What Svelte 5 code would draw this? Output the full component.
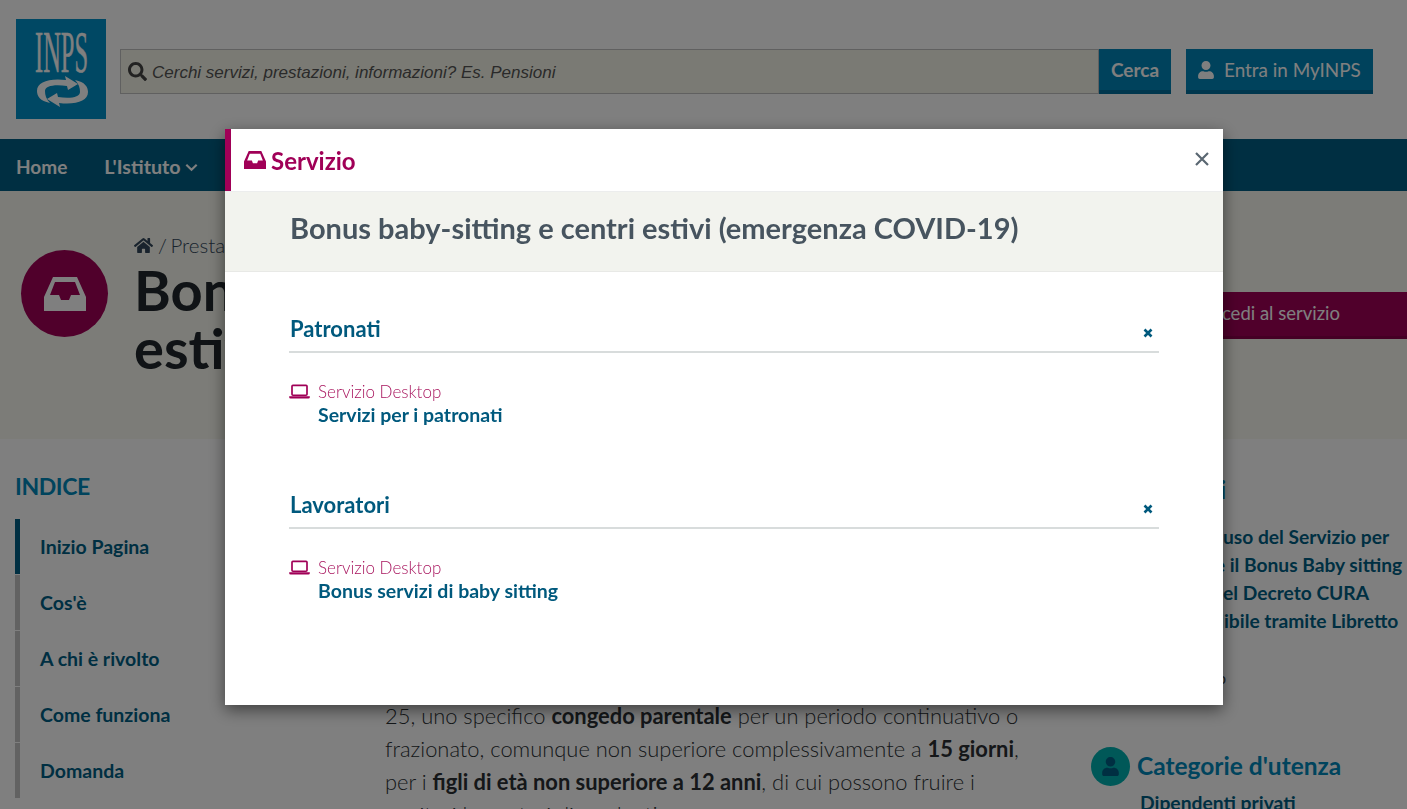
<script>
  const toc = ['Inizio Pagina', "Cos'è", 'A chi è rivolto', 'Come funziona', 'Domanda'];
  const links = [
    ['Guida all’', 'uso del Servizio per', 116],
    ['richiedere', ' il Bonus Baby sitting', 118],
    ['previsto d', 'el Decreto CURA', 116],
    ['spend', 'ibile tramite Libretto', 117]
  ];
  const groups = [
    { title: 'Patronati', link: 'Servizi per i patronati' },
    { title: 'Lavoratori', link: 'Bonus servizi di baby sitting' }
  ];
  const inbox = 'M9 0H33L42 20V34H0V20ZM11 5 6 18H15L17 23H25L27 18H36L31 5Z';
  const user = 'M224 256c70.7 0 128-57.3 128-128S294.7 0 224 0 96 57.3 96 128s57.3 128 128 128zm89.6 32h-16.7c-22.2 10.2-46.9 16-72.9 16s-50.6-5.8-72.9-16h-16.7C60.2 288 0 348.2 0 422.4V464c0 26.5 21.5 48 48 48h352c26.5 0 48-21.5 48-48v-41.6c0-74.2-60.2-134.4-134.4-134.4z';
  const swirl = 'M34 84C24 82 21 77 21 72C21 63 33 59 50 61L49 57L62 65L52 71L51 67C38 65 29 67 29 72C29 76 30 80 34 84Z';
</script>

<div class="page">
  <header class="top">
    <svg class="logo" viewBox="0 0 90 100" aria-label="INPS">
      <rect width="90" height="100" fill="#0090c8" />
      <text x="19" y="53" class="logotext" textLength="53" lengthAdjust="spacingAndGlyphs">INPS</text>
      <path d={swirl} fill="#fff" />
      <path d={swirl} fill="#fff" transform="rotate(180 46.5 72.5)" />
    </svg>
    <form class="search">
      <svg class="sicon" viewBox="0 0 512 512"><path d="M505 442.7L405.3 343c-4.5-4.5-10.6-7-17-7H372c27.6-35.3 44-79.7 44-128C416 93.1 322.9 0 208 0S0 93.1 0 208s93.1 208 208 208c48.3 0 92.7-16.4 128-44v16.3c0 6.4 2.5 12.5 7 17l99.7 99.7c9.4 9.4 24.6 9.4 33.9 0l28.3-28.3c9.4-9.4 9.4-24.6.1-34zM208 336c-70.7 0-128-57.2-128-128 0-70.7 57.2-128 128-128 70.7 0 128 57.2 128 128 0 70.7-57.2 128-128 128z" /></svg>
      <span class="ph">Cerchi servizi, prestazioni, informazioni? Es. Pensioni</span>
    </form>
    <span class="btn cerca">Cerca</span>
    <span class="btn entra">
      <svg class="uicon" viewBox="0 0 448 512"><path d={user} /></svg>
      Entra in MyINPS
    </span>
  </header>

  <nav class="nav">
    <span>Home</span>
    <span class="ist">L'Istituto <svg class="chev" viewBox="0 0 12 8"><path d="M1.2 1.5 6 6l4.8-4.5" /></svg></span>
  </nav>

  <section class="hero">
    <div class="badge"><svg viewBox="0 0 42 34"><path fill-rule="evenodd" d={inbox} /></svg></div>
    <div class="herotext">
      <div class="crumb">
        <svg viewBox="0 0 576 512"><path d="M280.37 148.26L96 300.11V464a16 16 0 0 0 16 16l112.06-.29a16 16 0 0 0 15.92-16V368a16 16 0 0 1 16-16h64a16 16 0 0 1 16 16v95.64a16 16 0 0 0 16 16.05L464 480a16 16 0 0 0 16-16V300L295.67 148.26a12.19 12.19 0 0 0-15.3 0zM571.6 251.47L488 182.56V44.05a12 12 0 0 0-12-12h-56a12 12 0 0 0-12 12v72.61L318.47 43a48 48 0 0 0-61 0L4.34 251.47a12 12 0 0 0-1.6 16.9l25.5 31A12 12 0 0 0 45.15 301l235.22-193.74a12.19 12.19 0 0 1 15.3 0L530.9 301a12 12 0 0 0 16.9-1.6l25.5-31a12 12 0 0 0-1.7-16.93z" /></svg>
        <span class="path">/ Prestazioni e servizi</span>
      </div>
      <h1>Bonus baby-sitting e centri<br />estivi (emergenza COVID-19)</h1>
    </div>
    <span class="access">Accedi al servizio</span>
  </section>

  <div class="columns">
    <aside class="index">
      <h2>INDICE</h2>
      <ul>
        {#each toc as t, i}
          <li class:active={i === 0}>{t}</li>
        {/each}
      </ul>
    </aside>
    <main class="body">
      <p>
        25, uno specifico <b>congedo parentale</b> per un periodo continuativo o<br />
        frazionato, comunque non superiore complessivamente a <b>15 giorni</b>,<br />
        per i <b>figli di età non superiore a 12 anni</b>, di cui possono fruire i<br />
        genitori lavoratori dipendenti
      </p>
    </main>
    <aside class="right">
      <h3 class="guide">Link utili</h3>
      <div class="guides">
        {#each links as l}
          <div class="gl"><span class="hid" style="width:{l[2]}px">{l[0]}</span>{l[1]}</div>
        {/each}
      </div>
      <div class="more">Mostra tutto</div>
      <div class="cat">
        <span class="catb"><svg viewBox="0 0 448 512"><path d={user} /></svg></span>
        <h3>Categorie d'utenza</h3>
      </div>
      <div class="dip">Dipendenti privati</div>
    </aside>
  </div>
</div>

<div class="overlay">
  <div class="modal">
    <div class="mhead">
      <svg class="minbox" viewBox="0 0 42 34"><path fill-rule="evenodd" d={inbox} /></svg>
      <span class="mtitle">Servizio</span>
      <svg class="close" viewBox="0 0 16 16"><path d="M2 2l12 12M14 2 2 14" /></svg>
    </div>
    <div class="band"><h2>Bonus baby-sitting e centri estivi (emergenza COVID-19)</h2></div>
    <div class="mbody">
      {#each groups as g}
        <section class="group">
          <div class="ghead">
            <h3>{g.title}</h3>
            <svg viewBox="0 0 10 10"><path d="M1.5 1.5l7 7M8.5 1.5l-7 7" /></svg>
          </div>
          <div class="item">
            <svg class="laptop" viewBox="0 0 22 16"><rect x="3" y="1.5" width="16" height="10.5" rx="1" /><path class="base" d="M0 13h22v1a1.5 1.5 0 0 1-1.5 1.5h-19A1.5 1.5 0 0 1 0 14z" /></svg>
            <div>
              <div class="kind">Servizio Desktop</div>
              <div class="lnk">{g.link}</div>
            </div>
          </div>
        </section>
      {/each}
    </div>
  </div>
</div>

<style>
  :global(html), :global(body) {
    margin: 0;
    height: 100%;
    overflow: hidden;
    background: #fff;
  }
  .page {
    height: 809px;
    overflow: hidden;
    font-family: Lato, "Noto Sans", sans-serif;
    color: #1f2933;
  }
  .top {
    height: 139px;
    box-sizing: border-box;
    padding: 19px 34px 0 16px;
    display: flex;
    align-items: flex-start;
  }
  .logo { width: 90px; height: 100px; flex: none; }
  .logotext { font-family: "Liberation Serif", serif; font-size: 60px; fill: #fff; stroke: #fff; stroke-width: 0.5; }
  .search {
    margin: 30px 0 0 14px;
    height: 45px;
    flex: 1;
    box-sizing: border-box;
    border: 1px solid #c0c0c0;
    background: #f5f5e8;
    display: flex;
    align-items: center;
    padding-left: 7px;
    gap: 5px;
  }
  .sicon { width: 19px; height: 19px; fill: #444; }
  .ph {
    font: italic 17px "Liberation Sans", sans-serif;
    color: #555;
    padding-top: 3px;
  }
  .btn {
    margin-top: 30px;
    height: 45px;
    box-sizing: border-box;
    background: #0085b8;
    border-bottom: 4px solid #006f9c;
    color: #fff;
    display: flex;
    align-items: center;
    font-size: 19px;
  }
  .cerca { width: 72px; justify-content: center; font-weight: 700; }
  .entra { width: 187px; margin-left: 15px; padding-left: 12px; gap: 10px; font-size: 18.9px; font-weight: 400; }
  .uicon { width: 16px; height: 18px; fill: #fff; }
  .nav {
    height: 52px;
    box-sizing: border-box;
    padding: 2px 0 0 16px;
    background: #005f85;
    color: #fff;
    display: flex;
    align-items: center;
    gap: 37px;
    font-weight: 700;
    font-size: 19px;
  }
  .ist { font-size: 19.7px; }
  .chev { width: 13px; height: 9px; fill: none; stroke: #fff; stroke-width: 2; margin-bottom: 2px; }
  .hero {
    height: 248px;
    background: #f8f9f0;
    position: relative;
    box-sizing: border-box;
    padding: 44px 0 0 21px;
    display: flex;
  }
  .badge {
    width: 87px;
    height: 87px;
    margin-top: 15px;
    border-radius: 50%;
    background: #a00057;
    display: flex;
    align-items: center;
    justify-content: center;
    flex: none;
  }
  .badge svg { width: 42px; height: 34px; fill: #fff; }
  .herotext { margin-left: 26px; }
  .crumb { font-size: 20.5px; font-weight: 300; color: #33475b; display: flex; align-items: center; gap: 5px; height: 20px; }
  .path { word-spacing: -2px; }
  .crumb svg { width: 19px; height: 17px; fill: #33475b; }
  h1 {
    margin: 6px 0 0;
    font-size: 56px;
    line-height: 58px;
    font-weight: 700;
    white-space: nowrap;
    color: #20262c;
  }
  .access {
    position: absolute;
    right: 0;
    top: 101px;
    width: 232px;
    height: 47px;
    box-sizing: border-box;
    background: #a00057;
    border-bottom: 3px solid #8a004a;
    color: #fff;
    display: flex;
    align-items: center;
    padding: 0 0 3px 26px;
    font-size: 18.5px;
  }
  .columns { display: flex; }
  .index { width: 385px; box-sizing: border-box; padding: 32px 0 0 15px; flex: none; }
  .index h2 { margin: 0 0 18px; font-size: 23px; letter-spacing: -0.4px; line-height: 30px; color: #0088bb; font-weight: 700; }
  .index ul { list-style: none; margin: 0; padding: 0; }
  .index li {
    height: 55px;
    margin-bottom: 1px;
    border-left: 5px solid #c4c4c4;
    padding-left: 20px;
    display: flex;
    align-items: center;
    font-weight: 700;
    font-size: 19.5px;
    color: #005f85;
  }
  .index li.active { border-left-color: #005f85; }
  .body { width: 706px; flex: none; }
  .body p {
    margin: 260px 0 0;
    font-size: 21.9px;
    line-height: 33px;
    font-weight: 300;
    color: #2a2f33;
    white-space: nowrap;
  }
  .body b { font-weight: 700; }
  .right { flex: 1; min-width: 0; white-space: nowrap; overflow: hidden; }
  .guide {
    width: 135px;
    height: 36px;
    line-height: 36px;
    margin: 33px 0 0;
    font-size: 24px;
    text-align: right;
    color: #0088bb;
  }
  .guides { margin: 15px 0 0 16px; font-size: 19.2px; font-weight: 700; color: #005f85; line-height: 28px; }
  .gl { height: 28px; }
  .hid { display: inline-block; white-space: pre; text-align: right; direction: rtl; }
  .more { width: 135px; margin-top: 33px; height: 20px; line-height: 20px; font-size: 15px; color: #444; text-align: right; }
  .cat { display: flex; align-items: center; gap: 7px; margin-top: 59px; }
  .catb {
    width: 39px; height: 39px; border-radius: 50%; background: #00b0b0;
    display: flex; align-items: center; justify-content: center;
  }
  .catb svg { width: 17px; height: 19px; fill: #005f85; }
  .cat h3 { margin: 0 0 2px; font-size: 24.5px; font-weight: 700; color: #0088bb; }
  .dip { margin: 5px 0 0 49px; font-size: 19.3px; font-weight: 700; color: #005f85; }

  .overlay {
    position: fixed;
    inset: 0;
    background: rgba(0, 0, 0, 0.5);
    font-family: Lato, "Noto Sans", sans-serif;
  }
  .modal {
    position: absolute;
    left: 225px;
    top: 129px;
    width: 998px;
    height: 576px;
    background: #fff;
    box-shadow: 0 5px 15px rgba(0, 0, 0, 0.5);
  }
  .mhead {
    height: 62px;
    box-sizing: border-box;
    border-left: 6px solid #a00057;
    display: flex;
    align-items: center;
    padding: 0 13px;
    color: #a00057;
  }
  .minbox { width: 22px; height: 18px; fill: #a00057; margin-right: 5px; }
  .mtitle { font-size: 24px; font-weight: 700; flex: 1; }
  .close { width: 16px; height: 16px; stroke: #5a6772; stroke-width: 2.2; fill: none; margin-bottom: 2px; }
  .band {
    height: 81px;
    box-sizing: border-box;
    background: #f2f3ee;
    border-top: 1px solid #eceded;
    border-bottom: 1px solid #e8e9e6;
    padding: 0 0 8px 65px;
    display: flex;
    align-items: center;
  }
  .band h2 { margin: 0; font-size: 29px; font-weight: 700; color: #47545f; }
  .mbody { padding: 41px 64px 0; }
  .group { height: 176px; }
  .ghead {
    height: 40px;
    box-sizing: border-box;
    border-bottom: 2px solid #d8dcdc;
    padding-bottom: 7px;
    display: flex;
    justify-content: space-between;
    align-items: center;
    padding-right: 6px;
  }
  .ghead h3 { margin: 0 0 0 1px; font-size: 22px; font-weight: 700; color: #00597d; }
  .ghead svg { width: 10px; height: 10px; stroke: #00597d; stroke-width: 2.6; fill: none; margin-top: 9px; }
  .item { display: flex; gap: 8px; margin-top: 27px; align-items: flex-start; }
  .laptop { width: 21px; height: 15px; margin-top: 4px; fill: none; stroke: #a00057; stroke-width: 1.8; }
  .laptop .base { fill: #a00057; stroke: none; }
  .kind { font-size: 17px; font-weight: 300; color: #a8155e; line-height: 23px; }
  .lnk { font-size: 19.5px; font-weight: 700; color: #00597d; line-height: 23px; }
</style>
